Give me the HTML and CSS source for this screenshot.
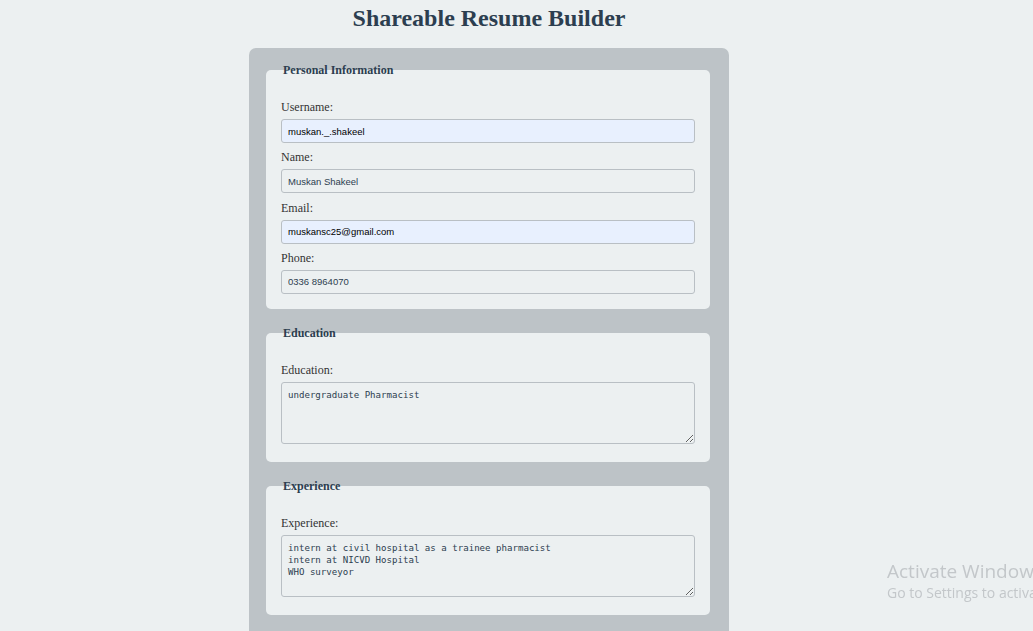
FILE: index.html
```html
<!DOCTYPE html>
<html lang="en">
<head>
<meta charset="utf-8">
<title>Shareable Resume Builder</title>
<link rel="stylesheet" href="styles.css">
</head>
<body>
<main class="page">
  <h1 class="title">Shareable Resume Builder</h1>
  <form class="builder">
    <fieldset class="section">
      <legend class="section-title">Personal Information</legend>
      <label class="field-label" for="username">Username:</label>
      <input class="field autofilled" id="username" type="text" value="muskan._.shakeel">
      <label class="field-label" for="name">Name:</label>
      <input class="field" id="name" type="text" value="Muskan Shakeel">
      <label class="field-label" for="email">Email:</label>
      <input class="field autofilled" id="email" type="email" value="muskansc25@gmail.com">
      <label class="field-label" for="phone">Phone:</label>
      <input class="field" id="phone" type="tel" value="0336 8964070">
    </fieldset>
    <fieldset class="section">
      <legend class="section-title">Education</legend>
      <label class="field-label" for="education">Education:</label>
      <textarea class="field area" id="education">undergraduate Pharmacist</textarea>
    </fieldset>
    <fieldset class="section">
      <legend class="section-title">Experience</legend>
      <label class="field-label" for="experience">Experience:</label>
      <textarea class="field area" id="experience">intern at civil hospital as a trainee pharmacist
intern at NICVD Hospital
WHO surveyor</textarea>
    </fieldset>
  </form>
</main>
<div class="watermark">
  <div class="wm-title">Activate Windows</div>
  <div class="wm-sub">Go to Settings to activate Windows.</div>
</div>
</body>
</html>
```
FILE: styles.css
```css
html, body {
  margin: 0;
  padding: 0;
  overflow: hidden;
  height: 100%;
}
body {
  background: #ecf0f1;
  font-family: "Liberation Serif", "Times New Roman", serif;
  color: #333;
}
.page {
  width: 480px;
  margin-left: 249px;
  padding-top: 4px;
}
.title {
  margin: 0 0 16px;
  font-size: 24px;
  line-height: 28px;
  font-weight: bold;
  text-align: center;
  color: #2c3e50;
}
.builder {
  background: #bdc3c7;
  border-radius: 7px;
  padding: 14px 15px 40px;
}
.section {
  margin: 0 4px 16px 2px;
  border: none;
  background: #ecf0f1;
  border-radius: 5px;
  padding: 22px 15px 8px;
  min-width: 0;
}
.section-title {
  padding: 0 2px;
  font-size: 12px;
  line-height: 16px;
  font-weight: bold;
  color: #2c3e50;
}
.field-label {
  display: block;
  font-size: 12px;
  line-height: 14px;
  margin-bottom: 5px;
  color: #333;
}
.field {
  display: block;
  box-sizing: border-box;
  width: 100%;
  height: 24px;
  margin: 0 0 7.33px;
  padding: 0 6px;
  border: 1px solid #b9bfc4;
  border-radius: 3px;
  background: #ecf0f1;
  font-family: "Liberation Sans", Arial, sans-serif;
  font-size: 9.5px;
  color: #2c3e50;
  outline: none;
}
.autofilled {
  background: #e8f0fe;
  color: #000;
}
.area {
  height: 62px;
  margin-bottom: 10px;
  padding: 6px 6px;
  font-family: "DejaVu Sans Mono", "Liberation Mono", monospace;
  font-size: 9.1px;
  line-height: 12px;
  color: #2c3e50;
  resize: vertical;
}
.watermark {
  position: fixed;
  left: 887px;
  top: 559px;
  white-space: nowrap;
  color: #c3c7ca;
  font-family: "Open Sans", "Noto Sans", sans-serif;
  pointer-events: none;
}
.wm-title {
  font-size: 19px;
  line-height: 25px;
}
.wm-sub {
  font-size: 14px;
  line-height: 18px;
}
```
